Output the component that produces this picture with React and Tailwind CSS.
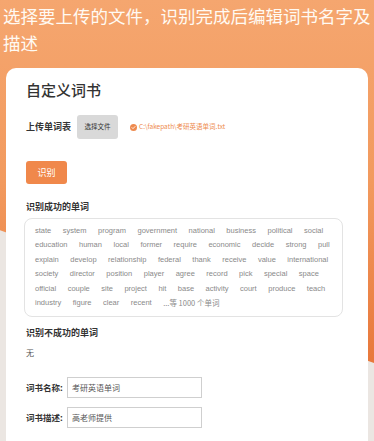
const words = [
  "state", "system", "program", "government", "national", "business", "political", "social",
  "education", "human", "local", "former", "require", "economic", "decide", "strong", "pull",
  "explain", "develop", "relationship", "federal", "thank", "receive", "value", "international",
  "society", "director", "position", "player", "agree", "record", "pick", "special", "space",
  "official", "couple", "site", "project", "hit", "base", "activity", "court", "produce", "teach",
  "industry", "figure", "clear", "recent",
]

const cjk = "font-['Noto_Sans_CJK_SC','Liberation_Sans',sans-serif]"

export default function App() {
  return (
    <div className={`relative min-h-[441px] h-[441px] overflow-hidden bg-[#ebe6e2] ${cjk}`}>
      {/* orange backdrop */}
      <div className="absolute inset-x-0 top-0 h-[363px] bg-gradient-to-b from-[#f5a66f] via-[#f29a5e] to-[#e8783b] [clip-path:polygon(0_0,100%_0,100%_100%,0_63.4%)]" />

      <div className="relative">
        <h1 className="pl-[3px] pt-[2px] text-[17.5px] leading-[27px] text-[#fffaf3] font-normal">
          选择要上传的文件，识别完成后编辑词书名字及描述
        </h1>

        <div className="mx-[6px] mt-[12px] rounded-[10px] bg-white pl-[20px] pr-[20px] pt-[12px] pb-[20px] h-[400px]">
          <h2 className="text-[15px] leading-[20px] font-medium text-[#333]">自定义词书</h2>

          <div className="mt-[15px] flex items-center h-[24px]">
            <span className="text-[9px] font-bold text-[#333] w-[51px]">上传单词表</span>
            <button className="h-[24px] w-[41px] rounded-[3px] bg-[#d9d9d9] text-[6.5px] text-[#333]">选择文件</button>
            <div className="ml-[12px] flex items-center gap-[2px] text-[6.5px] text-[#ee8a4e]">
              <svg width="7" height="7" viewBox="0 0 16 16">
                <circle cx="8" cy="8" r="8" fill="#ee8a4e" />
                <path d="M4.5 8.2l2.4 2.4 4.6-4.8" stroke="#fff" strokeWidth="2" fill="none" strokeLinecap="round" strokeLinejoin="round" />
              </svg>
              <span>C:\fakepath\考研英语单词.txt</span>
            </div>
          </div>

          <button className="mt-[22px] h-[23px] w-[41px] rounded-[3px] bg-[#f0884b] text-[9px] text-white">识别</button>

          <div className="mt-[17px] text-[9px] leading-[12px] font-bold text-[#333]">识别成功的单词</div>
          <div className="mt-[5px] -ml-[2px] w-[319px] h-[99px] rounded-[8px] border border-[#e3e3e3] pl-[10px] pr-[8px] pt-[5px]">
            <div className="flex flex-wrap gap-x-[11.5px] text-[7.5px] leading-[14.4px] text-[#8a8a8a] font-['Liberation_Sans',sans-serif]">
              {words.map((w) => (
                <span key={w}>{w}</span>
              ))}
              <span className={cjk}>...等 1000 个单词</span>
            </div>
          </div>

          <div className="mt-[10px] text-[9px] leading-[12px] font-bold text-[#333]">识别不成功的单词</div>
          <div className="mt-[8px] text-[8px] leading-[12px] text-[#555]">无</div>

          <div className="mt-[18px] flex items-center">
            <label className="w-[41px] text-[8.5px] font-bold text-[#333]">词书名称:</label>
            <input
              defaultValue="考研英语单词"
              className={`h-[21px] w-[135px] border border-[#cfcfcf] px-[4px] text-[8px] text-[#555] outline-none ${cjk}`}
            />
          </div>
          <div className="mt-[9px] flex items-center">
            <label className="w-[41px] text-[8.5px] font-bold text-[#333]">词书描述:</label>
            <input
              defaultValue="高老师提供"
              className={`h-[21px] w-[135px] border border-[#cfcfcf] px-[4px] text-[8px] text-[#555] outline-none ${cjk}`}
            />
          </div>
        </div>
      </div>
    </div>
  )
}
